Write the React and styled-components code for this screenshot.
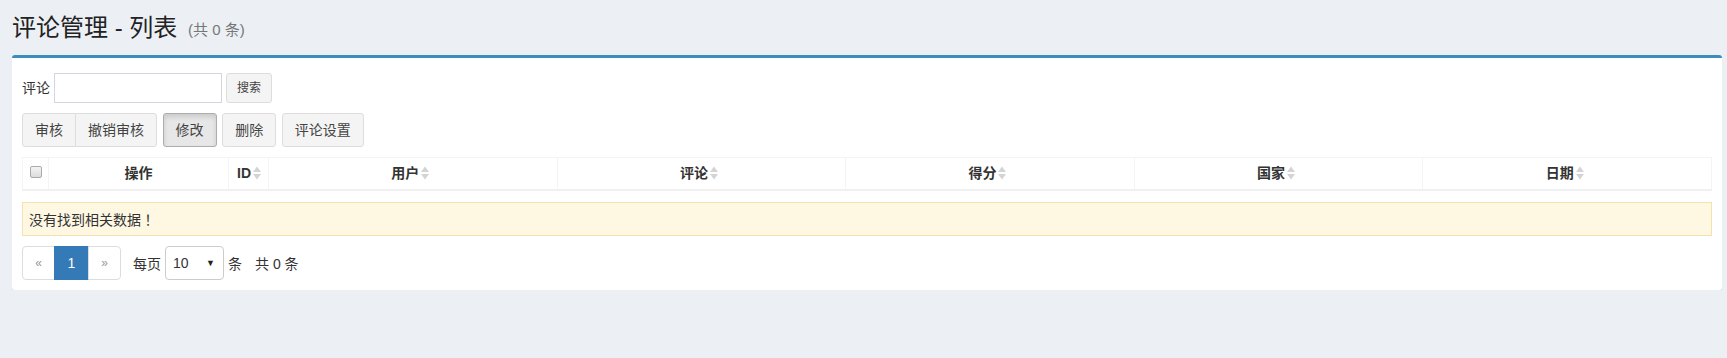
import React from "react";
import styled, { createGlobalStyle } from "styled-components";

const GlobalStyle = createGlobalStyle`
  html, body {
    margin: 0;
    padding: 0;
    background: #ecf0f5;
    font-family: "Liberation Sans", "Noto Sans CJK SC", sans-serif;
    font-size: 14px;
    color: #333;
  }
`;

const PageHeader = styled.div`
  padding: 10px 12px 0;
`;

const Title = styled.h1`
  margin: 0;
  height: 35px;
  display: flex;
  align-items: center;
  font-size: 24px;
  font-weight: normal;
  line-height: 1;
  color: #222;
  white-space: pre;
`;

const Count = styled.small`
  font-size: 15px;
  line-height: 1;
  color: #777;
  padding-left: 4px;
  margin-top: 3px;
`;

const Box = styled.div`
  margin: 10px 5px 0 12px;
  background: #fff;
  border-top: 3px solid #3c8dbc;
  border-radius: 3px;
  box-shadow: 0 1px 1px rgba(0, 0, 0, 0.1);
  padding: 15px 10px 10px;
`;

const SearchRow = styled.div`
  display: flex;
  align-items: center;
  height: 30px;
  margin-bottom: 10px;
`;

const Label = styled.span`
  line-height: 20px;
  margin-right: 4px;
`;

const Input = styled.input`
  box-sizing: border-box;
  width: 168px;
  height: 30px;
  border: 1px solid #d2d6de;
  margin: 0 4px 0 0;
  padding: 5px 8px;
  font-size: 12px;
`;

const Button = styled.button`
  box-sizing: border-box;
  height: ${(p) => (p.$small ? "30px" : "34px")};
  padding: 0 ${(p) => (p.$small ? "10px" : "12px")};
  font-family: inherit;
  font-size: ${(p) => (p.$small ? "12px" : "14px")};
  line-height: 1;
  color: #444;
  background: ${(p) => (p.$active ? "#e7e7e7" : "#f4f4f4")};
  border: 1px solid ${(p) => (p.$active ? "#adadad" : "#ddd")};
  border-radius: 3px;
  box-shadow: ${(p) => (p.$active ? "inset 0 3px 5px rgba(0,0,0,0.125)" : "none")};
  cursor: pointer;
`;

const Toolbar = styled.div`
  display: flex;
  gap: 5.6px;
  margin-bottom: 10px;
`;

const BtnGroup = styled.div`
  display: flex;
  & > button:first-child {
    border-top-right-radius: 0;
    border-bottom-right-radius: 0;
  }
  & > button:last-child {
    margin-left: -1px;
    border-top-left-radius: 0;
    border-bottom-left-radius: 0;
  }
`;

const Table = styled.table`
  width: 100%;
  table-layout: fixed;
  border-collapse: collapse;
  border: 1px solid #f4f4f4;
  margin-bottom: 11px;
`;

const Th = styled.th`
  box-sizing: border-box;
  height: 32px;
  padding: 0 ${(p) => (p.$flush ? 0 : 8)}px;
  border-left: 1px solid #f4f4f4;
  border-bottom: 2px solid #f0f0f0;
  font-size: 14px;
  font-weight: bold;
  line-height: 20px;
  color: #333;
  text-align: center;
  vertical-align: middle;
  ${(p) => (p.$width ? `width: ${p.$width}px;` : "")}
`;

const ThInner = styled.span`
  display: inline-flex;
  align-items: center;
  gap: 2px;
  padding-right: ${(p) => (p.$sortable ? "5px" : "0")};
`;

const CheckBox = styled.span`
  display: inline-block;
  box-sizing: border-box;
  width: 12px;
  height: 12px;
  margin-top: -5px;
  border: 1px solid #aaa;
  border-radius: 2px;
  background: linear-gradient(#f4f4f4, #dcdcdc);
  vertical-align: middle;
`;

const Alert = styled.div`
  box-sizing: border-box;
  height: 34px;
  padding: 0 6px;
  display: flex;
  align-items: center;
  background: #fef8e3;
  border: 1px solid #f3e2b0;
  color: #333;
  margin-bottom: 10px;
`;

const Punct = styled.span`
  font-family: "Noto Sans CJK TC", sans-serif;
`;

const Footer = styled.div`
  display: flex;
  align-items: center;
  height: 34px;
`;

const Pager = styled.div`
  display: flex;
  margin-right: 12px;
`;

const PageLink = styled.span`
  box-sizing: border-box;
  height: 34px;
  width: ${(p) => p.$w}px;
  display: flex;
  align-items: center;
  justify-content: center;
  font-size: ${(p) => (p.$active ? "14px" : "12px")};
  color: ${(p) => (p.$active ? "#fff" : "#999")};
  background: ${(p) => (p.$active ? "#337ab7" : "#fff")};
  border: 1px solid ${(p) => (p.$active ? "#337ab7" : "#ddd")};
  margin-left: -1px;
  &:first-child {
    margin-left: 0;
    border-radius: 4px 0 0 4px;
  }
  &:last-child {
    border-radius: 0 4px 4px 0;
  }
`;

const Text = styled.span`
  margin-right: ${(p) => p.$mr || 0}px;
`;

const Select = styled.div`
  box-sizing: border-box;
  width: 59px;
  height: 34px;
  border: 1px solid #ccc;
  border-radius: 4px;
  display: flex;
  align-items: center;
  justify-content: space-between;
  padding: 0 8px 0 7px;
  margin: 0 4px;
  font-size: 14px;
  color: #333;
`;

const Caret = styled.span`
  font-size: 9px;
  color: #222;
`;

function SortIcon() {
  return (
    <svg width="8" height="14" viewBox="0 0 8 14">
      <polygon points="0,6 4,0.5 8,6" fill="#d4d4d4" />
      <polygon points="0,8 8,8 4,13.5" fill="#d4d4d4" />
    </svg>
  );
}

const columns = [
  { title: "操作", width: 180 },
  { title: "ID", width: 40, sortable: true },
  { title: "用户", sortable: true },
  { title: "评论", sortable: true },
  { title: "得分", sortable: true },
  { title: "国家", sortable: true },
  { title: "日期", sortable: true },
];

export default function App() {
  return (
    <>
      <GlobalStyle />
      <PageHeader>
        <Title>
          评论管理 - 列表 <Count>(共 0 条)</Count>
        </Title>
      </PageHeader>
      <Box>
        <SearchRow>
          <Label>评论</Label>
          <Input type="text" />
          <Button $small>搜索</Button>
        </SearchRow>
        <Toolbar>
          <BtnGroup>
            <Button>审核</Button>
            <Button>撤销审核</Button>
          </BtnGroup>
          <Button $active>修改</Button>
          <Button>删除</Button>
          <Button>评论设置</Button>
        </Toolbar>
        <Table>
          <thead>
            <tr>
              <Th $width={26} $flush>
                <CheckBox />
              </Th>
              {columns.map((c) => (
                <Th key={c.title} $width={c.width}>
                  <ThInner $sortable={c.sortable}>
                    {c.title}
                    {c.sortable && <SortIcon />}
                  </ThInner>
                </Th>
              ))}
            </tr>
          </thead>
        </Table>
        <Alert>
          没有找到相关数据<Punct>！</Punct>
        </Alert>
        <Footer>
          <Pager>
            <PageLink $w={33}>«</PageLink>
            <PageLink $w={35} $active>1</PageLink>
            <PageLink $w={33}>»</PageLink>
          </Pager>
          <Text>每页</Text>
          <Select>
            10<Caret>▼</Caret>
          </Select>
          <Text $mr={13}>条</Text>
          <Text>共 0 条</Text>
        </Footer>
      </Box>
    </>
  );
}
